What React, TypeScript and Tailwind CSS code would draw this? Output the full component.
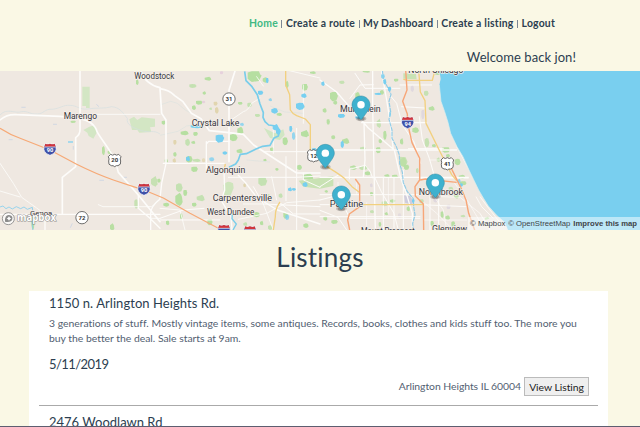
import React from "react";

type Blob = [number, number, number, number];

const greensWest: Blob[] = [
  [212, 152, 16, 7], [306, 228, 9, 28], [323, 240, 11, 13], [403, 388, 12, 28],
  [330, 460, 13, 22], [94, 430, 10, 50], [408, 28, 8, 17], [453, 318, 20, 32], [472, 326, 10, 12],
];
const greensMid: Blob[] = [
  [263, 4, 42, 32], [308, 22, 16, 16], [134, 20, 20, 12], [88, 42, 22, 12], [128, 64, 10, 10], [108, 92, 20, 12], [96, 106, 12, 14],
  [148, 112, 8, 8], [5, 152, 12, 12], [62, 182, 24, 14], [100, 186, 14, 12], [76, 206, 14, 22], [94, 212, 12, 10], [209, 192, 24, 22],
  [232, 170, 18, 24], [262, 98, 14, 14], [206, 160, 22, 10], [230, 236, 18, 14], [78, 258, 20, 20], [98, 266, 24, 10], [94, 290, 20, 16],
  [40, 246, 10, 14], [14, 266, 10, 12], [48, 340, 20, 26], [46, 368, 22, 40], [70, 360, 12, 18], [10, 398, 18, 12], [110, 374, 24, 20],
  [96, 398, 14, 12], [376, 32, 10, 22], [426, 42, 18, 20], [410, 104, 24, 14], [423, 180, 24, 22], [368, 202, 16, 24], [330, 232, 12, 12],
  [295, 322, 27, 26], [410, 284, 16, 16], [428, 310, 32, 20], [346, 294, 10, 8], [356, 370, 12, 14], [370, 426, 14, 20], [278, 426, 22, 16],
  [300, 452, 10, 14], [324, 466, 14, 14], [18, 450, 10, 16], [142, 448, 16, 18], [430, 460, 16, 14], [250, 456, 12, 12], [28, 20, 8, 10],
  [450, 4, 18, 8], [234, 96, 14, 8], [322, 372, 8, 10], [310, 266, 10, 8], [60, 430, 8, 18], [350, 128, 16, 10], [285, 132, 16, 9],
];
const greensEast: Blob[] = [
  [30, 66, 24, 28], [40, 92, 12, 12], [128, 0, 22, 8], [58, 32, 16, 10], [8, 114, 12, 14], [20, 148, 10, 16], [106, 66, 14, 22],
  [170, 146, 13, 28], [190, 182, 10, 28], [176, 206, 10, 14], [168, 232, 15, 18], [120, 230, 18, 12], [66, 204, 22, 18], [34, 196, 12, 12],
  [90, 286, 20, 14], [118, 288, 26, 12], [134, 304, 18, 12], [193, 312, 16, 10], [216, 314, 18, 10], [240, 262, 20, 28], [252, 284, 16, 16],
  [277, 172, 20, 17], [326, 108, 18, 14], [314, 204, 14, 28], [336, 222, 12, 10], [366, 232, 25, 16], [378, 252, 12, 10], [350, 262, 10, 14],
  [404, 266, 18, 20], [416, 314, 20, 12], [420, 334, 20, 12], [386, 350, 14, 14], [402, 364, 14, 22], [362, 424, 10, 20], [376, 436, 14, 14],
  [185, 394, 20, 15], [210, 388, 16, 10], [194, 426, 10, 10], [176, 456, 8, 14], [150, 420, 12, 10], [326, 330, 12, 16], [330, 452, 12, 16],
  [240, 204, 10, 20], [312, 62, 14, 16], [344, 6, 16, 9], [222, 26, 14, 9], [180, 60, 12, 14], [422, 434, 14, 8], [394, 454, 12, 18],
  [10, 438, 12, 14], [34, 450, 20, 12], [288, 294, 8, 16], [260, 408, 10, 16], [150, 366, 10, 12], [14, 360, 10, 8], [298, 388, 14, 12],
];
const pondsMid: Blob[] = [
  [167, 194, 26, 24], [188, 244, 14, 10], [78, 258, 12, 16], [148, 262, 15, 12], [92, 164, 34, 11], [294, 62, 16, 13], [334, 114, 20, 17],
  [326, 84, 10, 10], [408, 98, 26, 22], [424, 70, 16, 14], [388, 168, 9, 18], [396, 186, 10, 24], [384, 352, 12, 12], [396, 354, 12, 8],
  [428, 336, 15, 15], [376, 434, 12, 16], [456, 234, 14, 9], [338, 162, 18, 20], [348, 176, 14, 18], [240, 158, 12, 10], [318, 24, 8, 16],
];
const pondsEast: Blob[] = [
  [54, 132, 22, 12], [106, 138, 24, 9], [164, 68, 20, 7], [183, 12, 12, 14], [190, 26, 9, 18], [204, 50, 10, 14], [62, 212, 10, 22],
  [412, 326, 10, 14], [420, 340, 9, 10], [4, 34, 10, 14], [276, 388, 8, 10], [208, 124, 5, 16],
];

/* Turns a bounding box into an irregular park or pond outline. */
const outline = ([x, y, w, h]: Blob, i: number) => {
  const k = ((i * 7) % 5) / 10;
  return [
    [x, y + h * (0.1 + k * 0.5)], [x + w * (0.3 + k), y], [x + w * 0.8, y + h * k * 0.5], [x + w * 0.9, y + h * 0.3],
    [x + w, y + h * (0.4 + k)], [x + w * 0.8, y + h * 0.9], [x + w * (0.3 + k), y + h], [x + w * 0.15, y + h * 0.85], [x, y + h * 0.7],
  ].map((p) => p.join(",")).join(" ");
};

const Patches = ({ items, fill }: { items: Blob[]; fill: string }) => (
  <>{items.map((b, i) => <polygon key={i} points={outline(b, i)} fill={fill} opacity={i % 4 === 3 ? 0.75 : 1} />)}</>
);

const Town = ({ x, y, w, s = 26, children }: { x: number; y: number; w: number; s?: number; children: string }) => (
  <text x={x} y={y} textLength={w} lengthAdjust="spacingAndGlyphs" fontSize={s} fill="#35353a" stroke="#f6f0eb" strokeWidth="4" paintOrder="stroke" strokeLinejoin="round">{children}</text>
);

const Interstate = ({ x, y, n }: { x: number; y: number; n: string }) => (
  <g transform={`translate(${x} ${y})`}>
    <path d="M-14-17Q-8-13 0-17Q8-13 14-17L18-8Q22 10 0 18Q-22 10-18-8Z" fill="#3f51a8" stroke="#fff" strokeWidth="2" />
    <path d="M-14-17Q-8-13 0-17Q8-13 14-17L17-8H-17Z" fill="#d1343c" />
    <path d="M-17-7H17" stroke="#fff" strokeWidth="2" />
    <text y="9" textAnchor="middle" fontSize="17" fontWeight="700" fill="#fff">{n}</text>
  </g>
);

const UsRoute = ({ x, y, n }: { x: number; y: number; n: string }) => (
  <g transform={`translate(${x} ${y})`}>
    <path d="M-12-18Q-6-13 0-18Q6-13 12-18L19-11Q15-4 18 2Q20 14 10 16Q4 15 0 19Q-4 15-10 16Q-20 14-18 2Q-15-4-19-11Z" fill="#fff" stroke="#4d4d4d" strokeWidth="2.5" />
    <text y="6" textAnchor="middle" fontSize="18" fontWeight="700" fill="#333">{n}</text>
  </g>
);

const StateRoute = ({ x, y, n }: { x: number; y: number; n: string }) => (
  <g transform={`translate(${x} ${y})`}>
    <circle r="18.5" fill="#fff" stroke="#555" strokeWidth="2.5" />
    <text y="6.5" textAnchor="middle" fontSize="18" fontWeight="700" fill="#333">{n}</text>
  </g>
);

const Pin = ({ x, y }: { x: number; y: number }) => (
  <g transform={`translate(${x - 27} ${y - 70}) scale(2)`}>
    <ellipse cx="13.5" cy="34" rx="8" ry="4" opacity=".18" />
    <ellipse cx="13.5" cy="34" rx="5.5" ry="2.8" opacity=".25" />
    <path d="M27 13.5C27 19.07 20.25 27 14.75 34.5C14.02 35.5 12.98 35.5 12.25 34.5C6.75 27 0 19.22 0 13.5C0 6.04 6.04 0 13.5 0S27 6.04 27 13.5Z" fill="#3fb1ce" stroke="#318ca5" strokeWidth=".8" />
    <circle cx="13.5" cy="13.2" r="5.6" fill="#fff" />
  </g>
);

function MapView() {
  return (
    <svg className="block h-full w-full" viewBox="0 71 640 159" preserveAspectRatio="none" fontFamily="Roboto, 'Noto Sans', sans-serif">
      <g transform="translate(0 70) scale(.33333)">
        <rect width="1922" height="482" fill="#efe8e1" />
        <g fill="#d3e6c4">
          <path d="M247 50H269V114H258V108H247Z" />
          <path d="M388 148L402 140L412 150L425 142L465 146V170L450 172L454 186L418 188L412 180H396Z" />
          <path d="M250 180L268 170L284 166L292 184L288 192L280 206L266 198L262 188Z" />
        </g>
        <Patches items={greensWest} fill="#b9dfa3" />
        <path d="M0 135C20 112 45 132 65 125C85 122 90 134 112 132C130 132 135 116 155 118C180 116 190 104 210 106C230 106 240 120 262 117C290 112 315 117 335 110C360 112 368 128 382 145C378 165 400 174 425 182S460 178 480 192" fill="none" stroke="#d5dfe1" strokeWidth="2" />
        <path d="M0 411L9 408L18 416L27 411L37 417L49 410L62 416L72 411L82 418L97 412L99 429L110 438L96 452L99 480" fill="none" stroke="#85cfee" strokeWidth="2.5" />
        <path d="M220 228V239M64 112H77M26 209H38M159 163H171M298 331H312M370 322H381M289 103L297 110M217 460L211 473" stroke="#c2d0e4" strokeWidth="2" />
        <path d="M204 216H219" stroke="#82d2f1" strokeWidth="4" />
      </g>
      <g transform="translate(160 70) scale(.33333)">
        <path d="M190 346Q202 328 219 340L221 354L211 378L203 392L193 382Z" fill="#cee5bc" />
        <path d="M312 174L345 190L370 178L374 195L360 210L330 204Z" fill="#d1e6c3" />
        <Patches items={greensMid} fill="#b6dfa1" />
        <Patches items={[[161, 95, 12, 12], [165, 111, 11, 20], [38, 264, 10, 14], [126, 265, 10, 12], [250, 340, 8, 12], [40, 210, 10, 14]]} fill="#e1d5af" />
        <Patches items={[[180, 4, 10, 9], [126, 92, 10, 8], [206, 412, 8, 10], [290, 230, 10, 8]]} fill="#e6d1dc" />
        <path d="M0 105L32 94L52 100L76 120L100 134M0 196L54 184L80 168L110 164L150 175M330 108L374 126L430 130M260 270L330 276" fill="none" stroke="#dce2df" strokeWidth="2" />
      </g>
      <g transform="translate(320 70) scale(.33333)">
        <path d="M-64 332L0 324L40 318V348L0 356L-50 350ZM238 260L257 262L263 276L252 292L238 285ZM250 10L288 12L290 28L250 26Z" fill="#c9e2b4" />
        <Patches items={greensEast} fill="#b8dfa3" />
        <path d="M252 376L270 378L280 392L276 404L255 398Z" fill="#cfcddd" />
        <Patches items={[[304, 120, 10, 28], [272, 46, 10, 20], [340, 380, 12, 18], [234, 430, 10, 14], [150, 340, 8, 12], [380, 404, 12, 14]]} fill="#e0d8de" />
      </g>

      {/* Local streets */}
      <g fill="none" stroke="#fdfcfa" strokeLinejoin="round" strokeLinecap="round">
        <g transform="translate(0 70) scale(.33333)" strokeWidth="5">
          <path d="M240 0V180Q240 194 227 203V290L187 322V432M0 150Q20 132 50 134L180 139L235 145C265 150 286 165 291 185C310 220 345 250 355 307L415 375L480 455" />
          <path d="M0 433H480M135 433V480M415 376V415L450 445L480 475M480 387Q451 410 452 432V480" strokeWidth="4" />
          <path d="M240 133H480M0 280L40 340L65 382L110 414L135 433M0 363L60 381M295 404L309 410H455L480 388M452 445H480" strokeWidth="2.5" />
          <path d="M422 0Q434 42 480 53" />
        </g>
        <g transform="translate(160 70) scale(.33333)" strokeWidth="5">
          <path d="M0 56Q28 60 44 77L69 95L94 130L123 146L148 182L207 188L250 193L281 225L345 267L410 309H480M18 280V150L5 130L0 56M207 275V60L226 0" />
          <path d="M10 280H193M18 280L5 340L0 385M139 215V302M139 222L146 214H207M235 316L258 340L290 382L352 420L480 462M192 302L194 360L184 392L213 440L216 480" strokeWidth="4" />
          <path d="M310 245H480M430 309V330L440 334L480 352M205 322H410L480 318M360 398L400 432H480M280 350L310 402L480 410M410 175V480M378 260V392M0 445L70 420L132 415M0 450H180" strokeWidth="3" />
          <path d="M206 155L250 125Q264 122 275 100L300 84M380 0L480 24M430 45V160M340 170V250M335 320L350 390M310 48L290 20M235 448L320 430L380 398L480 390M250 402H310L340 480M0 415L60 420L75 480" strokeWidth="2.5" />
        </g>
        <g transform="translate(320 70) scale(.33333)" strokeWidth="4">
          <path d="M0 30L50 66L75 95L145 174L223 240L242 324L260 374L277 430V480M0 240H410M125 158H320M0 322H445M132 158L135 270L130 322M158 0V110L166 480M184 0L200 90L211 160L220 240" />
          <path d="M88 327V300Q88 292 99 295L136 286L150 303L158 324M165 324L184 365L222 430L235 480M0 404H300L440 410M0 440H300M0 374H300M190 322V480M222 324V480M250 300V480M303 324H445M330 330V480M356 344V480" strokeWidth="3" />
          <path d="M210 76L230 100L247 165L282 216L302 280M298 140L307 210L328 265L345 325M240 45H335M190 55H240M105 10L135 55H200M90 85L120 45L160 44M245 110L315 114M265 236H370M0 390L92 366M0 350L55 315M0 421L54 442L80 480M72 410L90 445H300" strokeWidth="3" />
          <path d="M385 90L410 230L465 333L480 360M330 270H390M325 355L370 420L380 480M340 379L420 382L480 430M400 335L435 380L480 455M310 450H440M140 398V480M54 337V370M110 335V370M205 325V430M312 398L350 430L400 480" strokeWidth="2" />
        </g>
      </g>

      {/* Rivers and ponds */}
      <g transform="translate(160 70) scale(.33333)">
        <path d="M254 4L258 32L276 50L292 74L300 102L310 128L309 142L315 155L326 165L349 168L359 181L355 198L342 204L330 226L308 229L288 237L259 251L241 253L235 270L227 282L207 292" fill="none" stroke="#79cdea" strokeWidth="5" strokeLinejoin="round" />
        <path d="M217 432L216 446L229 462L219 480" fill="none" stroke="#79cdea" strokeWidth="4" />
        <Patches items={pondsMid} fill="#77cff0" />
      </g>
      <g transform="translate(320 70) scale(.33333)">
        <path d="M187 0L190 28L202 50L213 73L207 94L212 125L207 148L216 180L216 205L229 230L238 255L239 281L247 307L250 338L262 365L280 386L281 410L285 435L278 460L280 480" fill="none" stroke="#91cce7" strokeWidth="3.5" strokeDasharray="13 2" />
        <Patches items={pondsEast} fill="#77cff0" />
        <path d="M358 0L362 27L358 45L363 94L374 125L384 157L392 190L411 230L429 260L447 300L461 329L476 360L490 384L505 408L530 436L555 458L565 482H962V0Z" fill="#79cfef" />
        <path d="M358 45L363 94L374 125L384 157L392 190L411 230L429 260L447 300L461 329L476 360L490 384L505 408L530 436L555 458" fill="none" stroke="#dcefed" strokeWidth="2" />
        <path d="M480 380L510 420L550 470M480 430L510 480M468 380L485 410L520 445" fill="none" stroke="#fbf9f6" strokeWidth="3" />
        <path d="M494 444L504 440L508 446L496 450Z" fill="#b6dfa1" />
      </g>

      {/* Highways */}
      <g fill="none" strokeLinejoin="round">
        <path transform="translate(0 70) scale(.33333)" d="M0 175Q30 195 66 207L150 240L230 283Q290 313 340 330L400 350L432 360L490 384L570 430L655 475" stroke="#f6a976" strokeWidth="3.6" />
        <g transform="translate(160 70) scale(.33333)" stroke="#f2d07f" strokeWidth="4">
          <path d="M377 0V45L389 74L391 120Q396 130 410 137L436 147L451 164V242L461 257M360 396Q345 418 346 440L340 480M196 282L192 300" />
        </g>
        <g transform="translate(320 70) scale(.33333)">
          <path d="M15 287Q52 308 73 325L96 350L118 367M128 404H310M250 28L265 31H337L345 0M296 0L301 66L315 92L318 160L356 237L395 314L410 332" stroke="#f2d07f" strokeWidth="4" />
          <path d="M257 0L261 60L248 94L262 132L263 160L276 218L299 265V330L285 350L286 378L310 402L311 480M301 330L316 327L410 337M106 327L119 345V410L88 432L83 450L89 480M390 287L422 352L438 390L446 430L464 480" stroke="#f7a678" strokeWidth="4.2" />
        </g>
      </g>

      <g transform="translate(0 70) scale(.33333)">
        <Town x={191} y={147} w={100}>Marengo</Town>
        <Town x={403} y={28} w={120}>Woodstock</Town>
        <Town x={90} y={437} w={67} s={23}>Genoa</Town>
        <Interstate x={150} y={238} n="90" />
        <Interstate x={432} y={358} n="90" />
        <UsRoute x={344} y={271} n="20" />
        <StateRoute x={246} y={443} n="72" />
      </g>
      <g transform="translate(160 70) scale(.33333)">
        <Town x={95} y={167} w={143}>Crystal Lake</Town>
        <Town x={138} y={309} w={118}>Algonquin</Town>
        <Town x={158} y={392} w={178}>Carpentersville</Town>
        <Town x={141} y={435} w={142} s={25}>West Dundee</Town>
        <StateRoute x={207} y={87} n="31" />
        <UsRoute x={461} y={257} n="12" />
        <Interstate x={192} y={482} n="90" />
        <Interstate x={270} y={486} n="90" />
      </g>
      <g transform="translate(320 70) scale(.33333)">
        <Town x={60} y={125} w={122} s={25}>Mundelein</Town>
        <Town x={29} y={412} w={101}>Palatine</Town>
        <Town x={296} y={376} w={133}>Northbrook</Town>
        <Town x={265} y={8} w={165} s={25}>North Chicago</Town>
        <Town x={336} y={485} w={105} s={25}>Glenview</Town>
        <Town x={123} y={492} w={161} s={25}>Mount Prospect</Town>
        <Interstate x={263} y={158} n="94" />
        <UsRoute x={382} y={281} n="41" />
        <Pin x={123} y={148} />
        <Pin x={16} y={293} />
        <Pin x={346} y={382} />
        <Pin x={64} y={418} />
      </g>
      <g transform="translate(0 70) scale(.33333)">
        <circle cx="25" cy="446" r="18" fill="#fff" fillOpacity=".7" stroke="#858585" strokeWidth="2.5" />
        <path d="M15 455Q14 434 27 435Q39 437 37 447Q34 458 15 455Z" fill="#8b8b8b" />
        <path d="M27 439L30 443L34 445L30 448L27 452L24 448L20 445L24 443Z" fill="#fff" />
        <text x="51" y="454" textLength="117" lengthAdjust="spacingAndGlyphs" fontFamily="'Open Sans', sans-serif" fontWeight="700" fontSize="30" fill="#fff" stroke="#777" strokeOpacity=".8" strokeWidth="3.5" paintOrder="stroke">mapbox</text>
      </g>
    </svg>
  );
}

const Separator = () => <span className="h-[8px] w-px bg-[#7c8794]" />;

function Listing({ title, text, date, place }: { title: string; text: string; date: string; place: string }) {
  return (
    <article className="h-[115px] border-b border-[#aaa] pr-[9px] pl-[10px]">
      <h2 className="pt-[2px] text-[13px] leading-[20px] tracking-[0.06px]">{title}</h2>
      <p className="pt-[3px] text-[10.4px] leading-[15px] tracking-[-0.01px] whitespace-pre text-[#526071]">{text}</p>
      <h3 className="pt-[8px] text-[13px] leading-[20px] tracking-[-0.7px]"><span className="tracking-[-0.55px]">{date}</span></h3>
      <div className="mt-[3px] flex items-center justify-end gap-[3px]">
        <span className="text-[10.4px] tracking-[-0.05px] text-[#526071]">{place}</span>
        <button className="h-[19px] w-[65px] border border-[#bbb] bg-[#efefef] text-[10.4px] leading-[16px] tracking-[-0.05px] whitespace-nowrap text-[#222]">View Listing</button>
      </div>
    </article>
  );
}

export default function App() {
  return (
    <div className="flex h-[427px] w-[640px] flex-col overflow-hidden bg-[#faf8e5] font-['Lato',sans-serif] text-[#2c3e50] [font-variant-ligatures:none]">
      <header className="h-[71px] shrink-0">
        <nav className="flex h-[47px] items-center gap-[3.5px] pl-[249px] text-[10.4px] font-bold tracking-[0.22px] whitespace-nowrap">
          <a className="text-[#42b983]">Home</a><Separator />
          <a>Create a route</a><Separator />
          <a>My Dashboard</a><Separator />
          <a>Create a listing</a><Separator />
          <a>Logout</a>
        </nav>
        <p className="pr-[64px] text-right text-[13px] leading-[21px] tracking-[0.06px]">Welcome back jon!</p>
      </header>
      <section className="relative h-[159px] shrink-0 overflow-hidden">
        <MapView />
        <div className="absolute right-0 bottom-0 flex h-[13px] items-center gap-[3px] bg-white/50 pr-[3px] pl-[2px] font-['Liberation_Sans',sans-serif] text-[7.7px] leading-[13px] whitespace-nowrap text-[#404448]">
          <span>© Mapbox</span><span>© OpenStreetMap</span><b>Improve this map</b>
        </div>
      </section>
      <h1 className="h-[61px] shrink-0 text-center text-[26px] leading-[54px] tracking-[0.2px]">Listings</h1>
      <main className="mr-[32px] ml-[29px] h-[135px] shrink-0 bg-white pr-[10px] pl-[10px]">
        <Listing
          title="1150 n. Arlington Heights Rd."
          text={"3 generations of stuff. Mostly vintage items, some antiques. Records, books, clothes and kids stuff too. The more you\nbuy the better the deal. Sale starts at 9am."}
          date="5/11/2019"
          place="Arlington Heights IL 60004"
        />
        <h2 className="pl-[10px] text-[13px] leading-[33px]">2476 Woodlawn Rd</h2>
      </main>
      <footer className="h-px shrink-0 bg-[#5d5e70]" />
    </div>
  );
}
